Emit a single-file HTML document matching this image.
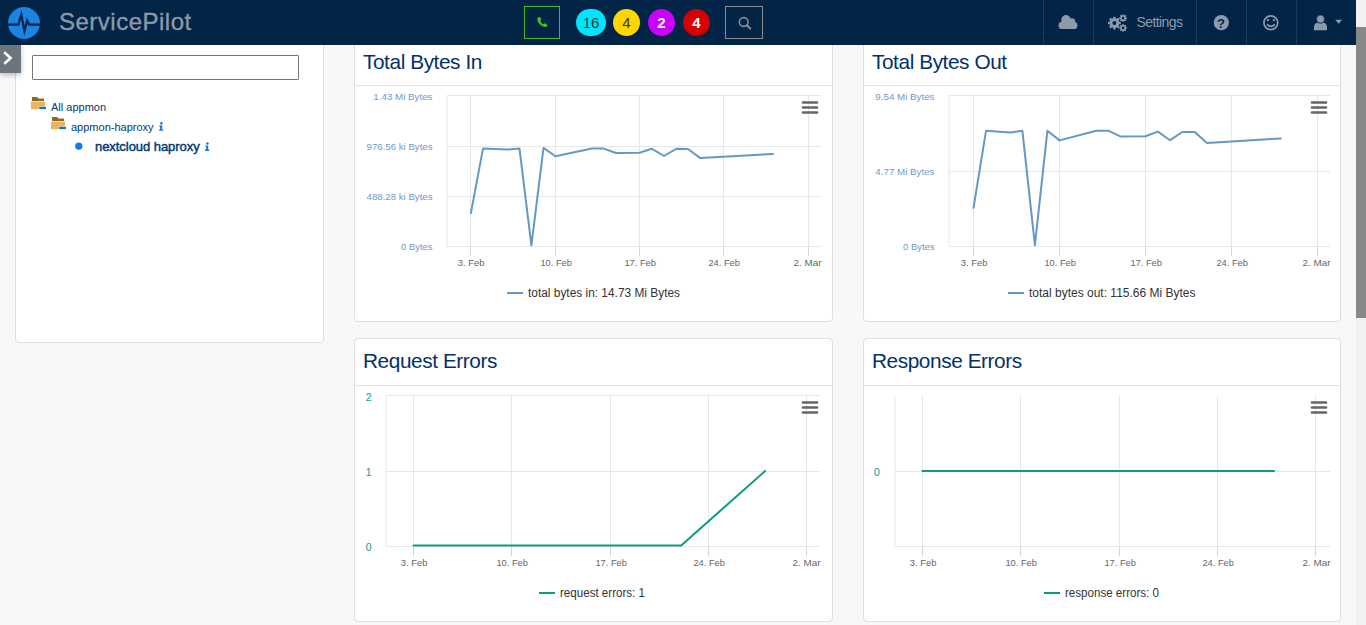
<!DOCTYPE html>
<html><head><meta charset="utf-8">
<style>
*{box-sizing:border-box;margin:0;padding:0}
html,body{width:1366px;height:625px;overflow:hidden;background:#f8f8f8;font-family:"Liberation Sans",sans-serif}
.abs{position:absolute}
#nav{position:absolute;left:0;top:0;width:1356px;height:45px;background:#012447}
#sb{position:absolute;left:1356px;top:0;width:10px;height:625px;background:#f1f1f1}
#thumb{position:absolute;left:1356px;top:27px;width:10px;height:291px;background:#888}
.sep{position:absolute;top:0;width:1px;height:45px;background:#1d3b5c}
.card{position:absolute;background:#fff;border:1px solid #dedede;border-radius:4px}
.title{position:absolute;font-size:20.8px;letter-spacing:-0.42px;color:#03306a;white-space:nowrap;line-height:22px}
.hdr{position:absolute;height:1px;background:#e3e3e3}
.badge{position:absolute;top:9px;height:27px;border-radius:14px;font-size:15px;line-height:27px;text-align:center}
.tree{position:absolute;white-space:nowrap;color:#023a73;font-size:11px;line-height:12px}
</style></head>
<body>
<!-- left panel -->
<div class="card" style="left:15px;top:20px;width:309px;height:323px"></div>
<div class="abs" style="left:32px;top:55px;width:267px;height:25px;border:1px solid #767676;border-radius:1px;background:#fff"></div>

<svg class="abs" style="left:0;top:0" width="340" height="200" viewBox="0 0 340 200">
<g transform="translate(0,0)"><path d="M32,97 L37.2,97 L38.2,98.4 L44,98.4 L44,101 L32,101 Z" fill="#8c6a22"/><rect x="31" y="101.6" width="14" height="7.6" fill="#e9b45e"/><rect x="38.7" y="106.3" width="7.8" height="3.3" fill="#fff" opacity="0.85"/><rect x="39.2" y="106.8" width="6.8" height="2.3" fill="#0b79c9"/></g>
<g transform="translate(20,20)"><path d="M32,97 L37.2,97 L38.2,98.4 L44,98.4 L44,101 L32,101 Z" fill="#8c6a22"/><rect x="31" y="101.6" width="14" height="7.6" fill="#e9b45e"/><rect x="38.7" y="106.3" width="7.8" height="3.3" fill="#fff" opacity="0.85"/><rect x="39.2" y="106.8" width="6.8" height="2.3" fill="#0b79c9"/></g>
<circle cx="78.8" cy="146.2" r="3.6" fill="#0d7ae8"/>
<g fill="#1877e6"><circle cx="161.4" cy="123.3" r="1.25"/><path d="M159.3,125.3 L162.2,125.3 L162.2,129.4 L163.2,129.4 L163.2,130.8 L159.0,130.8 L159.0,129.4 L160.1,129.4 L160.1,126.5 L159.3,126.5 Z"/></g>
<g fill="#1877e6"><circle cx="207.4" cy="143.4" r="1.25"/><path d="M205.3,145.4 L208.2,145.4 L208.2,149.5 L209.2,149.5 L209.2,150.9 L205.0,150.9 L205.0,149.5 L206.1,149.5 L206.1,146.6 L205.3,146.6 Z"/></g>
</svg>
<div class="tree" style="left:51px;top:101px">All appmon</div>
<div class="tree" style="left:71px;top:121px">appmon-haproxy</div>
<div class="tree" style="left:95px;top:139px;font-size:13px;letter-spacing:-0.05px;font-weight:normal;-webkit-text-stroke:0.45px #023a73;line-height:15px">nextcloud haproxy</div>

<!-- cards -->
<div class="card" style="left:354px;top:38px;width:479px;height:284px"></div>
<div class="card" style="left:863px;top:38px;width:478px;height:284px"></div>
<div class="card" style="left:354px;top:338px;width:479px;height:284px"></div>
<div class="card" style="left:863px;top:338px;width:478px;height:284px"></div>
<div class="hdr" style="left:355px;top:85px;width:477px"></div>
<div class="hdr" style="left:864px;top:85px;width:476px"></div>
<div class="hdr" style="left:355px;top:385px;width:477px"></div>
<div class="hdr" style="left:864px;top:385px;width:476px"></div>
<div class="title" style="left:363px;top:51px">Total Bytes In</div>
<div class="title" style="left:872px;top:51px">Total Bytes Out</div>
<div class="title" style="left:363px;top:350px">Request Errors</div>
<div class="title" style="left:872px;top:350px">Response Errors</div>

<!-- charts -->
<svg class="abs" style="left:0;top:0;font-family:'Liberation Sans',sans-serif" width="1356" height="625" viewBox="0 0 1356 625">
<line x1="447" y1="95.5" x2="821" y2="95.5" stroke="#e6e6e6" stroke-width="1"/>
<line x1="447" y1="146.5" x2="821" y2="146.5" stroke="#e6e6e6" stroke-width="1"/>
<line x1="447" y1="196.5" x2="821" y2="196.5" stroke="#e6e6e6" stroke-width="1"/>
<line x1="447" y1="246.5" x2="821" y2="246.5" stroke="#e6e6e6" stroke-width="1"/>
<line x1="470.5" y1="96" x2="470.5" y2="247" stroke="#e6e6e6" stroke-width="1"/>
<line x1="470.5" y1="247" x2="470.5" y2="256" stroke="#ccd6eb" stroke-width="1"/>
<line x1="555.5" y1="96" x2="555.5" y2="247" stroke="#e6e6e6" stroke-width="1"/>
<line x1="555.5" y1="247" x2="555.5" y2="256" stroke="#ccd6eb" stroke-width="1"/>
<line x1="639.5" y1="96" x2="639.5" y2="247" stroke="#e6e6e6" stroke-width="1"/>
<line x1="639.5" y1="247" x2="639.5" y2="256" stroke="#ccd6eb" stroke-width="1"/>
<line x1="723.5" y1="96" x2="723.5" y2="247" stroke="#e6e6e6" stroke-width="1"/>
<line x1="723.5" y1="247" x2="723.5" y2="256" stroke="#ccd6eb" stroke-width="1"/>
<line x1="808.5" y1="96" x2="808.5" y2="247" stroke="#e6e6e6" stroke-width="1"/>
<line x1="808.5" y1="247" x2="808.5" y2="256" stroke="#ccd6eb" stroke-width="1"/>
<line x1="447" y1="96" x2="447" y2="246" stroke="#e6e6e6" stroke-width="1"/>
<text x="432.5" y="99.6" text-anchor="end" font-size="9.5" fill="#6e99ca" textLength="59.2" lengthAdjust="spacingAndGlyphs">1.43 Mi Bytes</text>
<text x="432.5" y="149.6" text-anchor="end" font-size="9.5" fill="#6e99ca" textLength="65.9" lengthAdjust="spacingAndGlyphs">976.56 ki Bytes</text>
<text x="432.5" y="199.6" text-anchor="end" font-size="9.5" fill="#6e99ca" textLength="65.9" lengthAdjust="spacingAndGlyphs">488.28 ki Bytes</text>
<text x="432.5" y="249.6" text-anchor="end" font-size="9.5" fill="#6e99ca" textLength="31.5" lengthAdjust="spacingAndGlyphs">0 Bytes</text>
<text x="471.2" y="265.9" text-anchor="middle" font-size="9.8" fill="#666666" textLength="26.8" lengthAdjust="spacingAndGlyphs">3. Feb</text>
<text x="556.2" y="265.9" text-anchor="middle" font-size="9.8" fill="#666666" textLength="31.6" lengthAdjust="spacingAndGlyphs">10. Feb</text>
<text x="640.2" y="265.9" text-anchor="middle" font-size="9.8" fill="#666666" textLength="31.6" lengthAdjust="spacingAndGlyphs">17. Feb</text>
<text x="724.2" y="265.9" text-anchor="middle" font-size="9.8" fill="#666666" textLength="31.6" lengthAdjust="spacingAndGlyphs">24. Feb</text>
<text x="821.5" y="265.9" text-anchor="end" font-size="9.8" fill="#666666" textLength="28" lengthAdjust="spacingAndGlyphs">2. Mar</text>
<polyline points="470.9,213.1 483,148.6 508,149.6 519.5,148.6 531.4,245.5 543.5,147.9 555.4,156.3 592,148.6 604,148.6 615.9,153 639.6,152.8 651.7,148.7 664,156 676.6,148.7 688,149 700.3,158.1 772.9,154" fill="none" stroke="#6598c4" stroke-width="2" stroke-linejoin="round" stroke-linecap="round"/>
<line x1="507" y1="293" x2="523" y2="293" stroke="#6598c4" stroke-width="2"/>
<text x="528" y="297" text-anchor="start" font-size="12" fill="#333333" textLength="152" lengthAdjust="spacingAndGlyphs">total bytes in: 14.73 Mi Bytes</text>
<line x1="803" y1="102.5" x2="817" y2="102.5" stroke="#666" stroke-width="2.6" stroke-linecap="round"/>
<line x1="803" y1="107.5" x2="817" y2="107.5" stroke="#666" stroke-width="2.6" stroke-linecap="round"/>
<line x1="803" y1="112.5" x2="817" y2="112.5" stroke="#666" stroke-width="2.6" stroke-linecap="round"/>
<line x1="949" y1="95.5" x2="1330" y2="95.5" stroke="#e6e6e6" stroke-width="1"/>
<line x1="949" y1="171.5" x2="1330" y2="171.5" stroke="#e6e6e6" stroke-width="1"/>
<line x1="949" y1="246.5" x2="1330" y2="246.5" stroke="#e6e6e6" stroke-width="1"/>
<line x1="973.5" y1="96" x2="973.5" y2="247" stroke="#e6e6e6" stroke-width="1"/>
<line x1="973.5" y1="247" x2="973.5" y2="256" stroke="#ccd6eb" stroke-width="1"/>
<line x1="1059.5" y1="96" x2="1059.5" y2="247" stroke="#e6e6e6" stroke-width="1"/>
<line x1="1059.5" y1="247" x2="1059.5" y2="256" stroke="#ccd6eb" stroke-width="1"/>
<line x1="1145.5" y1="96" x2="1145.5" y2="247" stroke="#e6e6e6" stroke-width="1"/>
<line x1="1145.5" y1="247" x2="1145.5" y2="256" stroke="#ccd6eb" stroke-width="1"/>
<line x1="1231.5" y1="96" x2="1231.5" y2="247" stroke="#e6e6e6" stroke-width="1"/>
<line x1="1231.5" y1="247" x2="1231.5" y2="256" stroke="#ccd6eb" stroke-width="1"/>
<line x1="1317.5" y1="96" x2="1317.5" y2="247" stroke="#e6e6e6" stroke-width="1"/>
<line x1="1317.5" y1="247" x2="1317.5" y2="256" stroke="#ccd6eb" stroke-width="1"/>
<line x1="949" y1="96" x2="949" y2="246" stroke="#e6e6e6" stroke-width="1"/>
<text x="934.5" y="99.6" text-anchor="end" font-size="9.5" fill="#6e99ca" textLength="59.2" lengthAdjust="spacingAndGlyphs">9.54 Mi Bytes</text>
<text x="934.5" y="174.6" text-anchor="end" font-size="9.5" fill="#6e99ca" textLength="59.2" lengthAdjust="spacingAndGlyphs">4.77 Mi Bytes</text>
<text x="934.5" y="249.6" text-anchor="end" font-size="9.5" fill="#6e99ca" textLength="31.5" lengthAdjust="spacingAndGlyphs">0 Bytes</text>
<text x="974.2" y="265.9" text-anchor="middle" font-size="9.8" fill="#666666" textLength="26.8" lengthAdjust="spacingAndGlyphs">3. Feb</text>
<text x="1060.2" y="265.9" text-anchor="middle" font-size="9.8" fill="#666666" textLength="31.6" lengthAdjust="spacingAndGlyphs">10. Feb</text>
<text x="1146.2" y="265.9" text-anchor="middle" font-size="9.8" fill="#666666" textLength="31.6" lengthAdjust="spacingAndGlyphs">17. Feb</text>
<text x="1232.2" y="265.9" text-anchor="middle" font-size="9.8" fill="#666666" textLength="31.6" lengthAdjust="spacingAndGlyphs">24. Feb</text>
<text x="1330.5" y="265.9" text-anchor="end" font-size="9.8" fill="#666666" textLength="28" lengthAdjust="spacingAndGlyphs">2. Mar</text>
<polyline points="973.5,207.8 986,130.8 1010,132.5 1022.4,130.8 1034.9,245.2 1047.4,130.8 1059.5,140.4 1096.3,130.8 1108.8,130.8 1120.7,136.6 1145.5,136.3 1157.8,131.6 1170.1,140.2 1182.4,132 1194.7,132 1207,142.9 1280.8,138.4" fill="none" stroke="#6598c4" stroke-width="2" stroke-linejoin="round" stroke-linecap="round"/>
<line x1="1008" y1="293" x2="1024" y2="293" stroke="#6598c4" stroke-width="2"/>
<text x="1029" y="297" text-anchor="start" font-size="12" fill="#333333" textLength="166.5" lengthAdjust="spacingAndGlyphs">total bytes out: 115.66 Mi Bytes</text>
<line x1="1312" y1="102.5" x2="1326" y2="102.5" stroke="#666" stroke-width="2.6" stroke-linecap="round"/>
<line x1="1312" y1="107.5" x2="1326" y2="107.5" stroke="#666" stroke-width="2.6" stroke-linecap="round"/>
<line x1="1312" y1="112.5" x2="1326" y2="112.5" stroke="#666" stroke-width="2.6" stroke-linecap="round"/>
<line x1="386" y1="395.5" x2="820" y2="395.5" stroke="#e6e6e6" stroke-width="1"/>
<line x1="386" y1="471.5" x2="820" y2="471.5" stroke="#e6e6e6" stroke-width="1"/>
<line x1="386" y1="546.5" x2="820" y2="546.5" stroke="#e6e6e6" stroke-width="1"/>
<line x1="413.5" y1="396" x2="413.5" y2="547" stroke="#e6e6e6" stroke-width="1"/>
<line x1="413.5" y1="547" x2="413.5" y2="556" stroke="#ccd6eb" stroke-width="1"/>
<line x1="511.5" y1="396" x2="511.5" y2="547" stroke="#e6e6e6" stroke-width="1"/>
<line x1="511.5" y1="547" x2="511.5" y2="556" stroke="#ccd6eb" stroke-width="1"/>
<line x1="610.5" y1="396" x2="610.5" y2="547" stroke="#e6e6e6" stroke-width="1"/>
<line x1="610.5" y1="547" x2="610.5" y2="556" stroke="#ccd6eb" stroke-width="1"/>
<line x1="708.5" y1="396" x2="708.5" y2="547" stroke="#e6e6e6" stroke-width="1"/>
<line x1="708.5" y1="547" x2="708.5" y2="556" stroke="#ccd6eb" stroke-width="1"/>
<line x1="806.5" y1="396" x2="806.5" y2="547" stroke="#e6e6e6" stroke-width="1"/>
<line x1="806.5" y1="547" x2="806.5" y2="556" stroke="#ccd6eb" stroke-width="1"/>
<line x1="386" y1="396" x2="386" y2="546" stroke="#e6e6e6" stroke-width="1"/>
<text x="371.5" y="400.7" text-anchor="end" font-size="10.5" fill="#0a9c83">2</text>
<text x="371.5" y="475.7" text-anchor="end" font-size="10.5" fill="#0a9c83">1</text>
<text x="371.5" y="550.7" text-anchor="end" font-size="10.5" fill="#0a9c83">0</text>
<text x="414.2" y="565.9" text-anchor="middle" font-size="9.8" fill="#666666" textLength="26.8" lengthAdjust="spacingAndGlyphs">3. Feb</text>
<text x="512.2" y="565.9" text-anchor="middle" font-size="9.8" fill="#666666" textLength="31.6" lengthAdjust="spacingAndGlyphs">10. Feb</text>
<text x="611.2" y="565.9" text-anchor="middle" font-size="9.8" fill="#666666" textLength="31.6" lengthAdjust="spacingAndGlyphs">17. Feb</text>
<text x="709.2" y="565.9" text-anchor="middle" font-size="9.8" fill="#666666" textLength="31.6" lengthAdjust="spacingAndGlyphs">24. Feb</text>
<text x="820.5" y="565.9" text-anchor="end" font-size="9.8" fill="#666666" textLength="28" lengthAdjust="spacingAndGlyphs">2. Mar</text>
<polyline points="413.5,545.5 681.2,545.5 765.1,471" fill="none" stroke="#0a9c83" stroke-width="2" stroke-linejoin="round" stroke-linecap="round"/>
<line x1="539" y1="593" x2="555" y2="593" stroke="#0a9c83" stroke-width="2"/>
<text x="560" y="597" text-anchor="start" font-size="12" fill="#333333" textLength="85" lengthAdjust="spacingAndGlyphs">request errors: 1</text>
<line x1="803" y1="402.5" x2="817" y2="402.5" stroke="#666" stroke-width="2.6" stroke-linecap="round"/>
<line x1="803" y1="407.5" x2="817" y2="407.5" stroke="#666" stroke-width="2.6" stroke-linecap="round"/>
<line x1="803" y1="412.5" x2="817" y2="412.5" stroke="#666" stroke-width="2.6" stroke-linecap="round"/>
<line x1="895" y1="471.5" x2="1330" y2="471.5" stroke="#e6e6e6" stroke-width="1"/>
<line x1="895" y1="546.5" x2="1330" y2="546.5" stroke="#e6e6e6" stroke-width="1"/>
<line x1="922.5" y1="396" x2="922.5" y2="547" stroke="#e6e6e6" stroke-width="1"/>
<line x1="922.5" y1="547" x2="922.5" y2="556" stroke="#ccd6eb" stroke-width="1"/>
<line x1="1020.5" y1="396" x2="1020.5" y2="547" stroke="#e6e6e6" stroke-width="1"/>
<line x1="1020.5" y1="547" x2="1020.5" y2="556" stroke="#ccd6eb" stroke-width="1"/>
<line x1="1119.5" y1="396" x2="1119.5" y2="547" stroke="#e6e6e6" stroke-width="1"/>
<line x1="1119.5" y1="547" x2="1119.5" y2="556" stroke="#ccd6eb" stroke-width="1"/>
<line x1="1217.5" y1="396" x2="1217.5" y2="547" stroke="#e6e6e6" stroke-width="1"/>
<line x1="1217.5" y1="547" x2="1217.5" y2="556" stroke="#ccd6eb" stroke-width="1"/>
<line x1="1315.5" y1="396" x2="1315.5" y2="547" stroke="#e6e6e6" stroke-width="1"/>
<line x1="1315.5" y1="547" x2="1315.5" y2="556" stroke="#ccd6eb" stroke-width="1"/>
<line x1="895" y1="396" x2="895" y2="546" stroke="#e6e6e6" stroke-width="1"/>
<text x="879.8" y="475.7" text-anchor="end" font-size="10.5" fill="#0a9c83">0</text>
<text x="923.2" y="565.9" text-anchor="middle" font-size="9.8" fill="#666666" textLength="26.8" lengthAdjust="spacingAndGlyphs">3. Feb</text>
<text x="1021.2" y="565.9" text-anchor="middle" font-size="9.8" fill="#666666" textLength="31.6" lengthAdjust="spacingAndGlyphs">10. Feb</text>
<text x="1120.2" y="565.9" text-anchor="middle" font-size="9.8" fill="#666666" textLength="31.6" lengthAdjust="spacingAndGlyphs">17. Feb</text>
<text x="1218.2" y="565.9" text-anchor="middle" font-size="9.8" fill="#666666" textLength="31.6" lengthAdjust="spacingAndGlyphs">24. Feb</text>
<text x="1330.5" y="565.9" text-anchor="end" font-size="9.8" fill="#666666" textLength="28" lengthAdjust="spacingAndGlyphs">2. Mar</text>
<polyline points="922.5,471 1274,471" fill="none" stroke="#0a9c83" stroke-width="2" stroke-linejoin="round" stroke-linecap="round"/>
<line x1="1044" y1="593" x2="1060" y2="593" stroke="#0a9c83" stroke-width="2"/>
<text x="1065" y="597" text-anchor="start" font-size="12" fill="#333333" textLength="94" lengthAdjust="spacingAndGlyphs">response errors: 0</text>
<line x1="1312" y1="402.5" x2="1326" y2="402.5" stroke="#666" stroke-width="2.6" stroke-linecap="round"/>
<line x1="1312" y1="407.5" x2="1326" y2="407.5" stroke="#666" stroke-width="2.6" stroke-linecap="round"/>
<line x1="1312" y1="412.5" x2="1326" y2="412.5" stroke="#666" stroke-width="2.6" stroke-linecap="round"/>
</svg>
<!-- /charts -->
<!-- navbar -->
<div id="nav"></div>
<svg class="abs" style="left:0;top:0" width="1356" height="45" viewBox="0 0 1356 45">
 <circle cx="24" cy="23" r="16" fill="#1a84e5"/>
 <polyline points="7,24.6 18.4,24.6 21.3,14.5 24.4,30.9 27.1,20.6 29.2,24.6 41,24.6" fill="none" stroke="#012447" stroke-width="2.2" stroke-linejoin="miter" stroke-miterlimit="12"/>
 <rect x="524.5" y="6.5" width="35" height="32" fill="none" stroke="#3fbf1d" stroke-width="1"/>
 <path d="M537.6,18.2 C538.2,17 539.6,16.6 540.2,17.4 L541.1,18.8 C541.5,19.5 541.1,20.2 540.3,20.7 C540.8,22.4 541.9,23.6 543.5,24.3 C544,23.5 544.7,23.1 545.4,23.5 L546.8,24.4 C547.6,25 547.3,26.3 546.1,27 C543.8,27.8 537.6,24 537.3,19.6 Z" fill="#40c61c"/>
 <rect x="725.5" y="6.5" width="37" height="32" fill="none" stroke="#8a8a8a" stroke-width="1"/>
 <circle cx="743.7" cy="22" r="4.4" fill="none" stroke="#8a8a8a" stroke-width="1.6"/>
 <line x1="747" y1="25.3" x2="750.2" y2="28.5" stroke="#8a8a8a" stroke-width="2" stroke-linecap="round"/>
</svg>
<div class="abs" style="left:59px;top:8px;font-size:24px;letter-spacing:0.5px;color:#8d99a6;-webkit-text-stroke:0.35px #8d99a6;line-height:27px;white-space:nowrap">ServicePilot</div>
<div class="badge" style="left:576px;width:30px;background:#00e5ff;color:#333">16</div>
<div class="badge" style="left:613px;width:27px;background:#ffd600;color:#333">4</div>
<div class="badge" style="left:648px;width:27px;background:#cc00ff;color:#fff;font-weight:bold">2</div>
<div class="badge" style="left:683px;width:27px;background:#d50000;color:#fff;font-weight:bold">4</div>
<div class="sep" style="left:1043px"></div>
<div class="sep" style="left:1093px"></div>
<div class="sep" style="left:1196px"></div>
<div class="sep" style="left:1246px"></div>
<div class="sep" style="left:1296px"></div>
<svg class="abs" style="left:1040px;top:0" width="316" height="45" viewBox="1040 0 316 45">
 <g fill="#8c9bab">
  <circle cx="1066" cy="19.8" r="4.8"/>
  <circle cx="1071.8" cy="21.6" r="3.4"/>
  <rect x="1058.5" y="21.8" width="18.9" height="7.2" rx="3.6"/>
 </g>
 <g fill="#8c9bab" fill-rule="evenodd">
  <path d="M1119.14,21.84 L1120.81,22.03 L1120.81,24.17 L1119.14,24.36 L1118.64,25.56 L1119.69,26.88 L1118.18,28.39 L1116.86,27.34 L1115.66,27.84 L1115.47,29.51 L1113.33,29.51 L1113.14,27.84 L1111.94,27.34 L1110.62,28.39 L1109.11,26.88 L1110.16,25.56 L1109.66,24.36 L1107.99,24.17 L1107.99,22.03 L1109.66,21.84 L1110.16,20.64 L1109.11,19.32 L1110.62,17.81 L1111.94,18.86 L1113.14,18.36 L1113.33,16.69 L1115.47,16.69 L1115.66,18.36 L1116.86,18.86 L1118.18,17.81 L1119.69,19.32 L1118.64,20.64 Z M1112.40,23.10 a2.00,2.00 0 1,0 4.00,0 a2.00,2.00 0 1,0 -4.00,0 Z"/>
  <path d="M1126.01,17.35 L1127.05,17.47 L1127.05,18.73 L1126.01,18.85 L1125.68,19.63 L1126.34,20.45 L1125.45,21.34 L1124.63,20.68 L1123.85,21.01 L1123.73,22.05 L1122.47,22.05 L1122.35,21.01 L1121.57,20.68 L1120.75,21.34 L1119.86,20.45 L1120.52,19.63 L1120.19,18.85 L1119.15,18.73 L1119.15,17.47 L1120.19,17.35 L1120.52,16.57 L1119.86,15.75 L1120.75,14.86 L1121.57,15.52 L1122.35,15.19 L1122.47,14.15 L1123.73,14.15 L1123.85,15.19 L1124.63,15.52 L1125.45,14.86 L1126.34,15.75 L1125.68,16.57 Z M1121.80,18.10 a1.30,1.30 0 1,0 2.60,0 a1.30,1.30 0 1,0 -2.60,0 Z"/>
  <path d="M1126.01,27.15 L1127.05,27.27 L1127.05,28.53 L1126.01,28.65 L1125.68,29.43 L1126.34,30.25 L1125.45,31.14 L1124.63,30.48 L1123.85,30.81 L1123.73,31.85 L1122.47,31.85 L1122.35,30.81 L1121.57,30.48 L1120.75,31.14 L1119.86,30.25 L1120.52,29.43 L1120.19,28.65 L1119.15,28.53 L1119.15,27.27 L1120.19,27.15 L1120.52,26.37 L1119.86,25.55 L1120.75,24.66 L1121.57,25.32 L1122.35,24.99 L1122.47,23.95 L1123.73,23.95 L1123.85,24.99 L1124.63,25.32 L1125.45,24.66 L1126.34,25.55 L1125.68,26.37 Z M1121.80,27.90 a1.30,1.30 0 1,0 2.60,0 a1.30,1.30 0 1,0 -2.60,0 Z"/>
 </g>
 <circle cx="1221.3" cy="22.7" r="7.6" fill="#8c9bab"/>
 <circle cx="1270.8" cy="22.7" r="6.9" fill="none" stroke="#8c9bab" stroke-width="1.7"/>
 <circle cx="1268" cy="20.2" r="1.15" fill="#8c9bab"/>
 <circle cx="1273.8" cy="20.2" r="1.15" fill="#8c9bab"/>
 <path d="M1267,24.4 Q1270.9,28.4 1274.8,24.4" fill="none" stroke="#8c9bab" stroke-width="1.6"/>
 <path d="M1314,30.2 L1314,27.2 C1314,24.6 1315.8,23 1317.6,22.6 C1318.4,23.2 1319.4,23.5 1320.5,23.5 C1321.6,23.5 1322.6,23.2 1323.4,22.6 C1325.2,23 1327,24.6 1327,27.2 L1327,30.2 Z" fill="#8c9bab"/>
 <circle cx="1320.5" cy="19.1" r="4" fill="#8c9bab" stroke="#012447" stroke-width="0.6"/>
 <path d="M1335.2,19.8 L1342.2,19.8 L1338.7,23.8 Z" fill="#8c9bab"/>
</svg>
<div class="abs" style="left:1215px;top:16px;width:12px;text-align:center;font-size:13px;font-weight:bold;color:#012447;line-height:15px">?</div>
<div class="abs" style="left:1136.5px;top:14px;font-size:14px;letter-spacing:-0.6px;color:#8c9bab;line-height:16px;white-space:nowrap">Settings</div>
<div id="sb"></div><div id="thumb"></div>

<!-- toggle -->
<div class="abs" style="left:0;top:45px;width:21px;height:28px;background:#6c757d;box-shadow:0 2px 5px rgba(0,0,0,.25)"></div>
<svg class="abs" style="left:0;top:45px" width="21" height="28"><polyline points="5.2,8.2 10.6,13 5.2,17.8" fill="none" stroke="#fff" stroke-width="2.6" stroke-linecap="square"/></svg>
</body></html>
